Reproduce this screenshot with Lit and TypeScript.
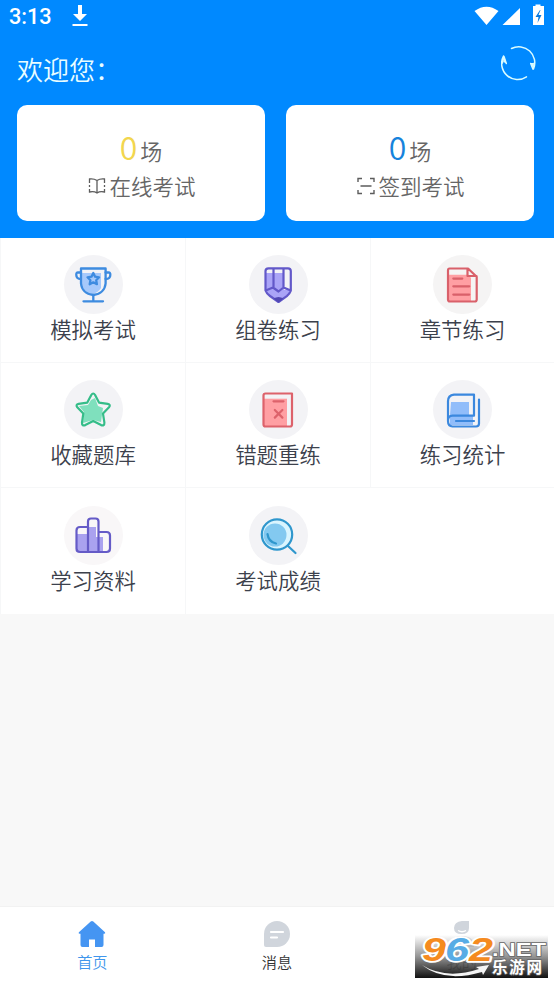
import { LitElement, html, css, svg } from "lit";
import { customElement } from "lit/decorators.js";

const trophy = svg`
  <path d="M18 18h19v15q-3 5-9 6q-9-2-10-10z" fill="#a6c9fb"/>
  <g fill="none" stroke="#3d8be0" stroke-width="2.300" stroke-linejoin="round" stroke-linecap="round">
    <path d="M17 13.500h24.600v15q-1 10-12.300 11.500Q18 38.500 17 28.500z"/>
    <path d="M17 17.500h-3q-2 0-1.700 2.500q0 4 4.700 4M41.600 17.500h3q2 0 1.700 2.500q0 4-4.700 4M29.300 40v6M19.500 46.300h19.500"/>
    <path d="M29.300 18l1.800 3.700 4 .6-2.900 2.900.7 4-3.600-1.900-3.600 1.900.7-4-2.900-2.900 4-.6z"/>
  </g>`;
const pencil = svg`
  <path d="M17 18h18v17l7-1-1 4-5 4-6.500 5L17 38z" fill="#aaa4f7"/>
  <g fill="none" stroke="#6258c9" stroke-width="2.200" stroke-linejoin="round">
    <path d="M19.500 13.300h19.500q2.800 0 2.800 2.800v19.500q-1 3-4 5.500L29.500 47l-8.500-6q-3.500-2.500-4.500-5.500V16.100q0-2.800 3-2.800zM24.500 13.500V33M34.500 13.500V33M16.700 35.500l7.300-3 5.500 4 5-4 7.300 3"/>
  </g><path d="M24.500 43.500q5-3 10 0l-5 4z" fill="#5148b4"/>`;
const doc = svg`
  <path d="M15 19.700h19l4 3V46H15z" fill="#ff9fa3"/>
  <g fill="none" stroke="#d9606a" stroke-width="2.200" stroke-linejoin="round" stroke-linecap="round">
    <path d="M16.500 13.500H35l8.700 8.300V44.500q0 2-2 2H17q-2 0-2-2V15.500q0-2 1.500-2zM34.500 14v7h9M20.300 23.600h9M20.300 31.300h16M20.300 39.600h16"/>
  </g>`;
const star = svg`
  <path d="M27 20l4-2 3 8 5 2-2 14-8-2-10 3 1-11-5-6 9-1z" fill="#7fe0bd"/>
  <path d="M27.300 15q1.900-3 3.800 0l3.900 7.600 8.700 1.300q3.400.8 1.300 3.400l-6 6.300 1.400 9q.1 3.800-3.300 2.500l-7.900-4-7.900 4q-3.500 1.300-3.300-2.500l1.300-9-6-6.300q-2-2.700 1.300-3.400l8.700-1.300z" fill="none" stroke="#35bd89" stroke-width="2.200" stroke-linejoin="round"/>`;
const wrong = svg`
  <path d="M15 18.700h23V46H15z" fill="#ff9fa3"/>
  <g fill="none" stroke="#dd626b" stroke-width="2.200" stroke-linejoin="round" stroke-linecap="round">
    <path d="M16.500 13.500h26.500V44.500q0 2-2 2H16.500q-2 0-2-2v-29q0-2 2-2zM24.500 21.300h10M25.800 30l7.600 7.600M33.400 30l-7.600 7.600"/>
  </g>`;
const stats = svg`
  <path d="M18 22h18v13h4v10H17V35z" fill="#91bdfa"/>
  <g fill="none" stroke="#3b88de" stroke-width="2.200" stroke-linejoin="round" stroke-linecap="round">
    <path d="M21 14.700h20v21H19.500q-4.500 0-4.500 5.300t4.500 5.500H43q3 0 3-3V19.500M21 14.700q-6 .8-6 6.500V41M23 41h18"/>
  </g>`;
const bars = svg`
  <path d="M13 28h10v-7h9v10h7v15H13z" fill="#aaa2ef"/>
  <g fill="none" stroke="#655bc7" stroke-width="2.200" stroke-linejoin="round">
    <path d="M24 46V15.500q0-3 3-3h4.500q3 0 3 3V46M24 21h-8q-3.500 0-3.500 3.500v18q0 3.500 3.500 3.500h26.500q3.500 0 3.500-3.500v-13q0-3.500-3.500-3.500h-8"/>
  </g>`;
const search = svg`
  <circle cx="28" cy="28.500" r="14" fill="#d9f5ff"/><circle cx="26" cy="29" r="11.500" fill="#83c9f0"/>
  <g fill="none" stroke="#2f97cd" stroke-width="2.200" stroke-linecap="round">
    <circle cx="28" cy="28.500" r="15.200"/><path d="M39 40l7.500 7M18.500 28q1 8 8.500 9.500"/>
  </g>`;

const entries = [
  { icon: trophy, label: "模拟考试", tint: "" },
  { icon: pencil, label: "组卷练习", tint: "" },
  { icon: doc, label: "章节练习", tint: "warm" },
  { icon: star, label: "收藏题库", tint: "" },
  { icon: wrong, label: "错题重练", tint: "" },
  { icon: stats, label: "练习统计", tint: "" },
  { icon: bars, label: "学习资料", tint: "rosy" },
  { icon: search, label: "考试成绩", tint: "" },
];

@customElement("app-root")
export class AppRoot extends LitElement {
  static styles = css`
    :host {
      display: flex;
      flex-direction: column;
      position: relative;
      height: 984px;
      overflow: hidden;
      background: #f8f8f8;
      font-family: "Noto Sans CJK SC", "Noto Sans", sans-serif;
      font-weight: 350;
      color: #3c414c;
    }
    * { box-sizing: border-box; }
    svg { display: block; flex: none; }
    .header { height: 238px; background: #0089ff; color: #fff; flex: none; }
    .status { height: 32px; display: flex; align-items: center; padding: 0 9px; }
    .time { font: 500 21.700px/32px Roboto, sans-serif; width: 62px; padding-top: 1px; }
    .spacer { flex: 1; }
    .welcome { height: 73px; display: flex; justify-content: space-between; padding: 0 18px 0 17px; }
    .hello { font-size: 26px; line-height: 38px; padding-top: 18px; color: #e9fdff; }
    .refresh { margin-top: 13px; }
    .cards { display: flex; gap: 21px; padding: 0 20px 0 17px; }
    .card {
      flex: 1; height: 116px; border-radius: 10px; background: #fff; color: #666;
      display: flex; flex-direction: column; align-items: center; padding-top: 23px;
    }
    .count { display: flex; align-items: baseline; height: 36px; line-height: 36px; gap: 3px; font-size: 22px; }
    .num { font-size: 32px; line-height: 36px; }
    .yellow { color: #f2d64e; }
    .blue { color: #1683dc; }
    .caption { display: flex; align-items: center; gap: 3px; font-size: 21.500px; line-height: 32px; margin-top: 6px; padding-left: 2px; }
    .caption svg { margin-top: -1px; }
    .grid {
      display: grid; grid-template-columns: 185px 185px 1fr; grid-template-rows: 125px 125px 126px;
      background: #fff; flex: none; border-left: 1px solid #f6f7f8;
    }
    .cell {
      display: flex; flex-direction: column; align-items: center; padding-top: 17px;
      border-right: 1px solid #f6f7f8; border-bottom: 1px solid #f6f7f8;
    }
    .cell:nth-child(3n) { border-right: 0; }
    .cell:nth-child(n + 7) { padding-top: 18px; border-bottom: 0; }
    .cell:nth-child(8) { border-right: 0; padding-right: 1px; }
    .disc { width: 59px; height: 59px; border-radius: 50%; background: #f3f3f6; }
    .warm { background: #f5f4f4; }
    .rosy { background: #f9f7f8; }
    .label { font-size: 21.400px; line-height: 32px; white-space: nowrap; margin-top: -1px; }
    .tabs { height: 78px; margin-top: auto; background: #fff; border-top: 1px solid #f2f2f2; display: flex; }
    .tab { flex: 1; display: flex; flex-direction: column; align-items: center; padding-top: 12px; font-size: 15.200px; line-height: 22px; color: #333; }
    .tab svg { margin-bottom: 1px; }
    .active { color: #4096ec; }
    .mark {
      position: absolute; left: 415px; top: 935px; width: 133px; height: 43px;
      background: linear-gradient(rgba(255,255,255,0.300), rgba(130,130,130,0.850) 50%, #111);
    }
    .mark svg { overflow: visible; }
    .mark text { font-family: "Liberation Sans", sans-serif; font-weight: 700; }
    .mark .cn { font-family: "Noto Sans CJK SC", sans-serif; }
  `;

  render() {
    return html`
      <div class="header">
        <div class="status">
          <span class="time">3:13</span>
          <svg width="18" height="22" viewBox="0 0 18 22" fill="#fff"><path d="M7 0h4v9h5l-7 7-7-7h5zM1.500 19h15v2h-15z"/></svg>
          <span class="spacer"></span>
          <svg width="71" height="24" viewBox="0 0 71 24" fill="#fff">
            <path d="M0.500 7Q12.500-1.500 24.500 7L12.500 21zM46 4v17H28.500zM59 2h2.500V.5h5V2H70v19H59z"/>
            <path d="M66 6l-4.500 7h3l-1 6 4-8h-3l2-5z" fill="#0879df"/>
          </svg>
        </div>
        <div class="welcome">
          <div class="hello">欢迎您：</div>
          <svg class="refresh" width="35" height="36" viewBox="0 0 35 36" fill="none" stroke="#d9fbff" stroke-width="1.500" stroke-linejoin="round" stroke-linecap="round">
            <path d="M10.500 3.500A16 16 0 0 1 32.500 24M29.700 18.500l2.300 5.700 1.700-7.200M25.500 31.800A16 16 0 0 1 2.500 11M5.300 18.500L3 11.500 1.300 18"/>
            <path d="M29.500 18l2.700 5 .8-5zM5.500 18.500L3.300 12l-1 5z" fill="#d9fbff" stroke="none"/>
          </svg>
        </div>
        <div class="cards">
          <div class="card">
            <div class="count"><span class="num yellow">0</span><span>场</span></div>
            <div class="caption">
              <svg width="18" height="18" viewBox="0 0 18 18" fill="none" stroke="#5c5c5c" stroke-width="1.300"><path d="M9 3.500Q6 1.500 1.500 2V6M1.500 8v2M1.500 12v3Q6 14 9 16q3-2 7.500-1v-3M16.500 10V8M16.500 6V2Q12 1.500 9 3.500V16"/></svg>
              <span>在线考试</span>
            </div>
          </div>
          <div class="card">
            <div class="count"><span class="num blue">0</span><span>场</span></div>
            <div class="caption">
              <svg width="18" height="18" viewBox="0 0 18 18" fill="none" stroke="#5c5c5c" stroke-width="1.400"><path d="M1 5V1.500h4M13 1.500h4V5M1 13v3.500h4M13 16.500h4V13M3.500 9h11"/></svg>
              <span>签到考试</span>
            </div>
          </div>
        </div>
      </div>
      <div class="grid">
        ${entries.map((e) => html`
          <div class="cell">
            <div class="disc ${e.tint}"><svg width="59" height="59" viewBox="0 0 59 59">${e.icon}</svg></div>
            <div class="label">${e.label}</div>
          </div>`)}
      </div>
      <div class="tabs">
        <div class="tab active">
          <svg width="28" height="30" viewBox="0 0 28 30"><path d="M12.700 2.500q1.300-1 2.600 0L27 13.200q.8 1.300-.7 1.500H25.500V26q0 2-2 2H17v-7.500h-6V28H4.500q-2 0-2-2V14.700H1.500q-1.500-.2-.6-1.500z" fill="#4595f2"/></svg>
          <span>首页</span>
        </div>
        <div class="tab">
          <svg width="28" height="30" viewBox="0 0 28 30"><path d="M14 2a13 13 0 0 1 0 26H3q-2 0-2-2V15A13 13 0 0 1 14 2z" fill="#d0d5dc"/><path d="M8 13h12M8 18.500h6" stroke="#fff" stroke-width="2.200" stroke-linecap="round"/></svg>
          <span>消息</span>
        </div>
        <div class="tab">
          <svg width="28" height="30" viewBox="0 0 28 30" fill="#d0d5dc"><path d="M14 2h7v7q0 6-7.500 6T6 9q0-6 8-7zM2 28q0-11 12-11t12 11z"/><path d="M10 11.500q4 2.500 8 0" fill="none" stroke="#fff" stroke-width="1.300"/></svg>
          <span>我的</span>
        </div>
      </div>
      <div class="mark">
        <svg width="133" height="43" viewBox="0 0 133 43">
          <path d="M7 30q24 15 57 4l-3-2 13-2-6 10-1-3Q29 48 7 30z" fill="#f5f5f5"/>
          <g font-size="33" font-style="italic" stroke="#fff" stroke-width="3.500" stroke-linejoin="round" paint-order="stroke">
            <text x="7" y="26" textLength="24" lengthAdjust="spacingAndGlyphs" fill="#f58b1f">9</text>
            <text x="30" y="26" textLength="24" lengthAdjust="spacingAndGlyphs" fill="#58ace5">6</text>
            <text x="54" y="26" textLength="24" lengthAdjust="spacingAndGlyphs" fill="#f58b1f">2</text>
          </g>
          <g fill="#fff" stroke="#666" stroke-width="1.500" paint-order="stroke">
            <text x="77" y="21" font-size="19" textLength="54" lengthAdjust="spacingAndGlyphs">.NET</text>
            <text class="cn" x="77" y="38" font-size="15.500" textLength="50" lengthAdjust="spacing">乐游网</text>
          </g>
        </svg>
      </div>
    `;
  }
}
